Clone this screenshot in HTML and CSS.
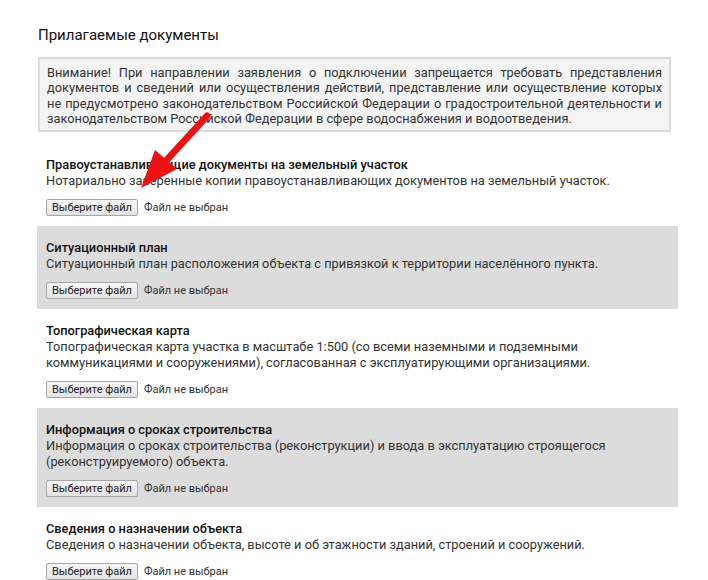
FILE: index.html
```html
<!DOCTYPE html>
<html lang="ru">
<head>
<meta charset="utf-8">
<link rel="stylesheet" href="styles.css">
</head>
<body>
<div class="page">
  <h2 class="title">Прилагаемые документы</h2>
  <div class="notice">Внимание! При направлении заявления о подключении запрещается требовать представления документов и сведений или осуществления действий, представление или осуществление которых не предусмотрено законодательством Российской Федерации о градостроительной деятельности и законодательством Российской Федерации в сфере водоснабжения и водоотведения.</div>

  <div class="docs">
    <div class="doc">
      <div class="doc-title">Правоустанавливающие документы на земельный участок</div>
      <div class="doc-desc">Нотариально заверенные копии правоустанавливающих документов на земельный участок.</div>
      <div class="file"><span class="btn">Выберите файл</span><span class="none">Файл не выбран</span></div>
    </div>
    <div class="doc alt">
      <div class="doc-title">Ситуационный план</div>
      <div class="doc-desc">Ситуационный план расположения объекта с привязкой к территории населённого пункта.</div>
      <div class="file"><span class="btn">Выберите файл</span><span class="none">Файл не выбран</span></div>
    </div>
    <div class="doc">
      <div class="doc-title">Топографическая карта</div>
      <div class="doc-desc">Топографическая карта участка в масштабе 1:500 (со всеми наземными и подземными коммуникациями и сооружениями), согласованная с эксплуатирующими организациями.</div>
      <div class="file"><span class="btn">Выберите файл</span><span class="none">Файл не выбран</span></div>
    </div>
    <div class="doc alt">
      <div class="doc-title">Информация о сроках строительства</div>
      <div class="doc-desc">Информация о сроках строительства (реконструкции) и ввода в эксплуатацию строящегося (реконструируемого) объекта.</div>
      <div class="file"><span class="btn">Выберите файл</span><span class="none">Файл не выбран</span></div>
    </div>
    <div class="doc">
      <div class="doc-title">Сведения о назначении объекта</div>
      <div class="doc-desc">Сведения о назначении объекта, высоте и об этажности зданий, строений и сооружений.</div>
      <div class="file"><span class="btn">Выберите файл</span><span class="none">Файл не выбран</span></div>
    </div>
  </div>
</div>
<svg class="arrow" width="708" height="580" viewBox="0 0 708 580">
  <line x1="207" y1="116" x2="163" y2="164" stroke="#ee1111" stroke-width="7" stroke-linecap="round"/>
  <polygon points="141,188 155,150 177,169" fill="#ee1111"/>
</svg>
</body>
</html>
```

FILE: styles.css
```css
html, body {
  margin: 0;
  padding: 0;
  background: #fff;
}
body {
  font-family: Roboto, "Liberation Sans", sans-serif;
  color: #222;
  position: relative;
}
.page {
  width: 641px;
  padding: 26px 0 0 37px;
}
.title {
  margin: 0 0 13px 1px;
  font-size: 15px;
  font-weight: 400;
  line-height: 18px;
  color: #111;
}
.notice {
  width: 615px;
  margin-left: 1px;
  background: #f4f4f4;
  border: 2px solid #dcdcdc;
  padding: 6px 7px 3px 7px;
  font-size: 12.8px;
  line-height: 15.4px;
  text-align: justify;
  color: #333;
}
.docs {
  margin-top: 11px;
  display: flex;
  flex-direction: column;
}
.doc {
  padding: 14px 9px 10px 9px;
  display: flex;
  flex-direction: column;
}
.doc.alt {
  background: #dcdcdc;
}
.doc-title {
  font-size: 12.8px;
  font-weight: 500;
  line-height: 16px;
  color: #111;
}
.doc-desc {
  font-size: 12.8px;
  line-height: 16px;
  color: #333;
  width: 605px;
}
.file {
  margin-top: 10px;
  display: flex;
  align-items: center;
  gap: 6px;
  font-size: 11px;
}
.btn {
  display: inline-block;
  height: 15px;
  line-height: 15px;
  padding: 0 5px;
  border: 1px solid #a6a6a6;
  border-radius: 2px;
  background: linear-gradient(#f7f7f7, #e3e3e3);
  color: #222;
}
.none {
  color: #333;
}
.arrow {
  position: absolute;
  left: 0;
  top: 0;
  pointer-events: none;
}
```
